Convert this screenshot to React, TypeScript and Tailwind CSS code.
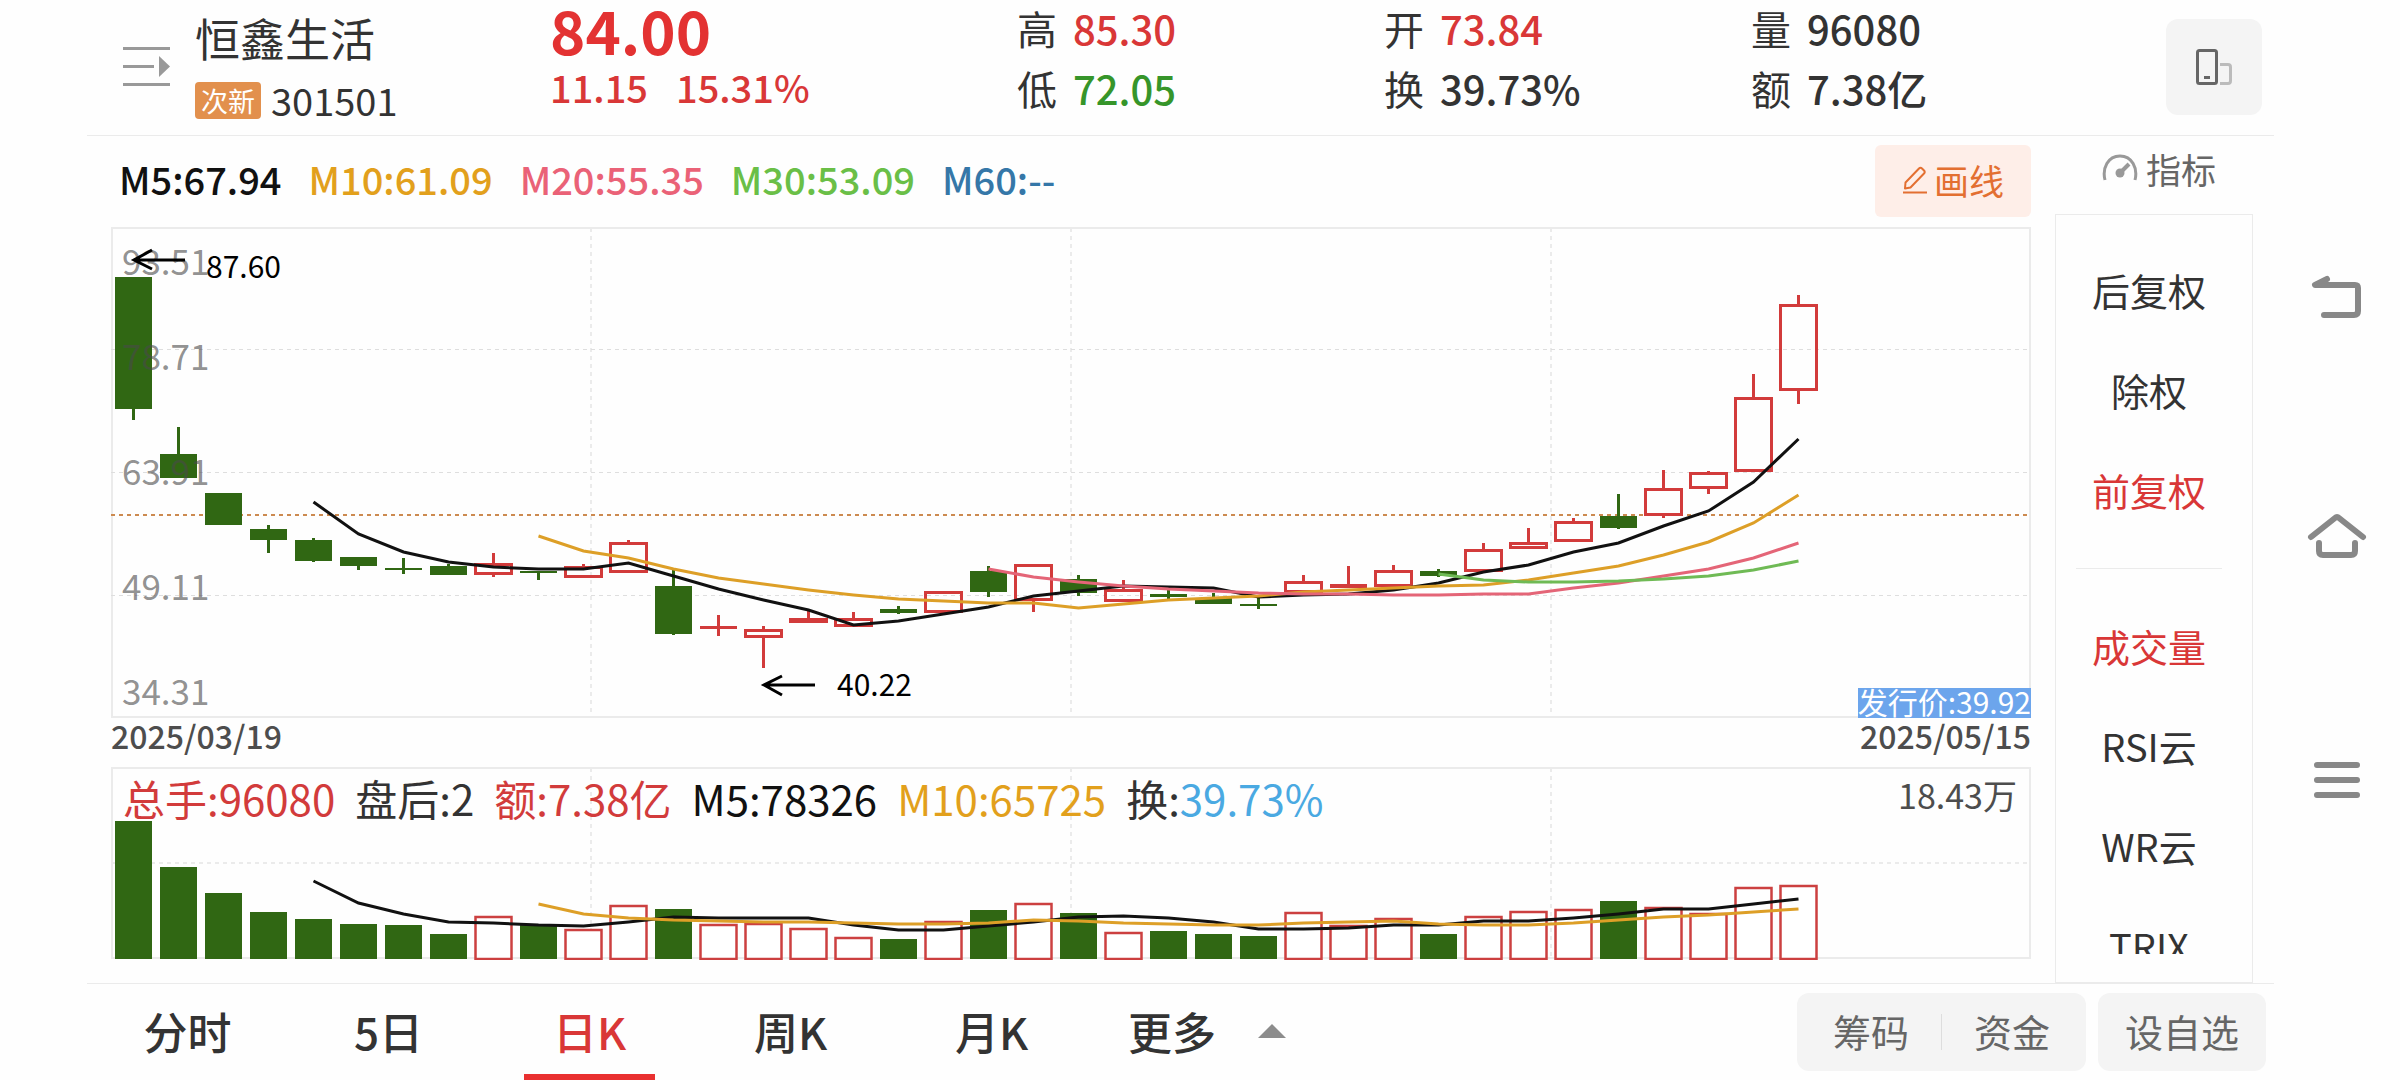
import React from "react"
import clsx from "clsx"

type Candle = [dir: "up" | "down", high: number, top: number, bottom: number, low: number]

const STEP = 45
const centerX = (i: number) => 22.5 + i * STEP

const candles: Candle[] = [
  ["down", 277, 277, 409, 420],
  ["down", 427, 454, 478, 478],
  ["down", 493, 493, 525, 525],
  ["down", 525, 529, 540, 553],
  ["down", 538, 540, 561, 562],
  ["down", 557, 557, 566, 570],
  ["down", 558, 568, 570, 574],
  ["down", 564, 566, 575, 575],
  ["up", 553, 563, 575, 577],
  ["down", 571, 571, 573, 580],
  ["up", 564, 566, 578, 578],
  ["up", 540, 542, 573, 573],
  ["down", 570, 586, 634, 635],
  ["up", 615, 626, 629, 636],
  ["up", 626, 629, 638, 668],
  ["up", 610, 618, 623, 623],
  ["up", 612, 618, 627, 627],
  ["down", 606, 609, 613, 614],
  ["up", 591, 591, 613, 613],
  ["down", 566, 571, 592, 597],
  ["up", 564, 564, 601, 612],
  ["down", 575, 579, 593, 596],
  ["up", 580, 589, 602, 602],
  ["down", 590, 594, 597, 599],
  ["down", 593, 598, 604, 604],
  ["down", 598, 604, 606, 609],
  ["up", 575, 581, 593, 593],
  ["up", 566, 584, 588, 588],
  ["up", 565, 570, 587, 587],
  ["down", 569, 571, 576, 577],
  ["up", 543, 549, 572, 572],
  ["up", 528, 542, 549, 549],
  ["up", 518, 521, 542, 542],
  ["down", 494, 516, 528, 529],
  ["up", 470, 488, 516, 518],
  ["up", 471, 472, 489, 494],
  ["up", 374, 397, 472, 472],
  ["up", 295, 304, 391, 404],
]

const volumeTops = [
  821, 867, 893, 912, 919, 924, 925, 934, 917, 925, 930, 906, 909, 925, 924, 929, 938, 939, 922,
  910, 904, 913, 933, 931, 934, 936, 913, 926, 919, 934, 917, 912, 910, 901, 908, 914, 888, 886,
]

const priceLines = [
  { from: 4, color: "#111111", ys: [502, 534, 552, 562, 567, 569, 569, 563, 576, 589, 600, 610, 625, 621, 614, 607, 596, 591, 586, 587, 588, 597, 595, 594, 590, 583, 572, 565, 552, 543, 526, 511, 482, 439] },
  { from: 9, color: "#dd9f27", ys: [536, 551, 558, 569, 578, 584, 590, 595, 599, 601, 603, 603, 608, 604, 600, 598, 596, 592, 590, 588, 586, 585, 580, 573, 566, 555, 542, 523, 495] },
  { from: 19, color: "#e46577", ys: [569, 577, 582, 586, 589, 591, 593, 594, 594, 595, 595, 594, 594, 588, 583, 576, 569, 558, 543] },
  { from: 29, color: "#6fba55", ys: [574, 580, 582, 582, 581, 579, 576, 570, 561] },
]

const volumeLines = [
  { from: 4, color: "#111111", ys: [881, 903, 914, 922, 923, 925, 926, 922, 917, 918, 918, 918, 925, 930, 930, 926, 922, 917, 916, 918, 922, 929, 929, 928, 925, 925, 921, 921, 918, 914, 909, 909, 904, 899] },
  { from: 9, color: "#dd9f27", ys: [904, 914, 918, 920, 921, 922, 922, 923, 924, 924, 923, 920, 921, 923, 924, 925, 925, 923, 922, 921, 924, 925, 925, 923, 920, 917, 915, 912, 909] },
]

const quotes = [
  [
    { label: "高", value: "85.30", color: "text-[#d93737]" },
    { label: "低", value: "72.05", color: "text-[#36952a]" },
  ],
  [
    { label: "开", value: "73.84", color: "text-[#d93737]" },
    { label: "换", value: "39.73%", color: "text-[#333333]" },
  ],
  [
    { label: "量", value: "96080", color: "text-[#333333]" },
    { label: "额", value: "7.38亿", color: "text-[#333333]" },
  ],
]

const averages = [
  { text: "M5:67.94", color: "text-[#111111]" },
  { text: "M10:61.09", color: "text-[#e2a01c]" },
  { text: "M20:55.35", color: "text-[#ea6277]" },
  { text: "M30:53.09", color: "text-[#6abf47]" },
  { text: "M60:--", color: "text-[#3577a8]" },
]

const axisLabels = [
  { text: "93.51", y: 275 },
  { text: "78.71", y: 370 },
  { text: "63.91", y: 485 },
  { text: "49.11", y: 600 },
  { text: "34.31", y: 705 },
]

const adjustModes = ["后复权", "除权", "前复权"]
const indicators = ["成交量", "RSI云", "WR云", "TRIX"]
const periods = ["分时", "5日", "日K", "周K", "月K"]

const GRID_X = [480, 960, 1440]

const Averages = ({ lines }: { lines: typeof priceLines }) => (
  <>
    {lines.map((line) => (
      <polyline
        key={line.color}
        points={line.ys.map((y, i) => `${centerX(line.from + i)},${y}`).join(" ")}
        fill="none"
        stroke={line.color}
        strokeWidth="3"
      />
    ))}
  </>
)

const PriceChart = () => (
  <svg viewBox="0 227 1920 491" className="block h-auto w-full" role="img" aria-label="日K">
    <g stroke="#ebebeb" strokeWidth="2" fill="none">
      <rect x="1" y="228" width="1918" height="489" />
      {GRID_X.map((x) => (
        <line key={x} x1={x} x2={x} y1="228" y2="717" strokeDasharray="4 4" />
      ))}
    </g>
    {[349.5, 472.5, 595.5].map((y) => (
      <line key={y} x1="0" x2="1920" y1={y} y2={y} stroke="#dedede" strokeDasharray="4 4" />
    ))}
    <line x1="0" x2="1920" y1="515" y2="515" stroke="#cc8a50" strokeWidth="2" strokeDasharray="4 4" />
    {candles.map(([dir, high, top, bottom, low], i) => {
      const x = centerX(i)
      const color = dir === "up" ? "#d23b3b" : "#306713"
      const hollow = dir === "up" && bottom - top > 4
      return (
        <g key={i} fill={color}>
          <rect x={x - 1.5} y={high} width="3" height={top - high} />
          <rect x={x - 1.5} y={bottom} width="3" height={low - bottom} />
          {hollow ? (
            <rect x={x - 18} y={top + 1.5} width="36" height={bottom - top - 3} fill="none" stroke={color} strokeWidth="3" />
          ) : (
            <rect x={x - 18.5} y={top} width="37" height={bottom - top} />
          )}
        </g>
      )
    })}
    <Averages lines={priceLines} />
    <g fontSize="35" fill="#4a4a4a" fillOpacity="0.62">
      {axisLabels.map((label) => (
        <text key={label.text} x="11" y={label.y}>
          {label.text}
        </text>
      ))}
    </g>
    <g stroke="#000000" strokeWidth="3" fill="none">
      <path d="M74 260H23M41 250L23 260L41 269" />
      <path d="M704 685H653M671 676L653 685L671 695" />
    </g>
    <g fontSize="30" fill="#000000">
      <text x="95" y="278">87.60</text>
      <text x="726" y="696">40.22</text>
    </g>
  </svg>
)

const VolumeChart = () => (
  <svg viewBox="0 767 1920 193" className="block h-auto w-full" role="img" aria-label="成交量">
    <g stroke="#ebebeb" strokeWidth="2" fill="none">
      <rect x="1" y="768" width="1918" height="190" />
      <line x1="0" x2="1920" y1="863" y2="863" strokeDasharray="4 4" />
      {GRID_X.map((x) => (
        <line key={x} x1={x} x2={x} y1="768" y2="958" strokeDasharray="4 4" />
      ))}
    </g>
    {volumeTops.map((y, i) =>
      candles[i][0] === "up" ? (
        <rect key={i} x={centerX(i) - 18} y={y} width="36" height={959 - y} fill="#ffffff" stroke="#cc4040" strokeWidth="2.5" />
      ) : (
        <rect key={i} x={centerX(i) - 18.5} y={y} width="37" height={959 - y} fill="#306713" />
      )
    )}
    <Averages lines={volumeLines} />
  </svg>
)

const Header = () => (
  <header className="flex h-[136px] items-start border-b border-[#ebebeb] pr-3">
    <button aria-label="展开列表" className="ml-9 mt-[46px]">
      <svg width="47" height="40" viewBox="0 0 47 40" fill="#999999">
        <rect width="47" height="3" y="1" />
        <rect width="31" height="3" y="19" />
        <rect width="47" height="3" y="37" />
        <path d="M36 10L47 20.500L36 31Z" />
      </svg>
    </button>
    <div className="ml-[25px] w-[355px] pt-2 text-[#333333]">
      <h1 className="text-[45px]/[60px]">恒鑫生活</h1>
      <div className="flex items-center gap-2.5 pt-0.5">
        <span className="rounded bg-[#e2904d] px-1.5 text-[27px]/[37px] text-white">次新</span>
        <span className="text-[38px]/[60px]">301501</span>
      </div>
    </div>
    <div className="w-[467px] font-medium text-[#d93737]">
      <div className="text-[60px]/[58px] font-bold text-[#e33232]">84.00</div>
      <div className="flex gap-7 text-[38px]/[58px]">
        <span>11.15</span>
        <span>15.31%</span>
      </div>
    </div>
    <dl className="flex flex-1">
      {quotes.map((column) => (
        <div key={column[0].label} className="flex w-[367px] flex-col gap-1">
          {column.map((item) => (
            <div key={item.label} className="flex gap-4 text-[40px]/[56px]">
              <dt className="text-[#333333]">{item.label}</dt>
              <dd className={clsx("font-medium", item.color)}>{item.value}</dd>
            </div>
          ))}
        </div>
      ))}
    </dl>
    <button aria-label="切换竖屏" className="mt-[19px] flex size-24 items-center justify-center rounded-xl bg-[#f4f4f4]">
      <svg width="38" height="38" viewBox="0 0 38 38" fill="none" strokeWidth="3">
        <rect x="2.500" y="2.500" width="19" height="33" rx="2" stroke="#666666" />
        <path d="M9 29.500H15" stroke="#666666" />
        <path d="M25 16.500H33Q35.500 16.500 35.500 19V33Q35.500 35.500 33 35.500H25" stroke="#bbbbbb" />
      </svg>
    </button>
  </header>
)

const Sidebar = () => (
  <aside className="flex w-[198px] shrink-0 flex-col">
    <button className="flex h-[78px] items-start justify-center gap-2 pl-2.5 pt-2.5 text-[35px]/[46px] text-[#666666]">
      <svg width="36" height="28" viewBox="0 0 36 28" fill="none" stroke="#999999" strokeWidth="3" className="mt-2">
        <path d="M3 26C0 14 6 2 18 2S36 14 33 26" />
        <path d="M18 19L27 10" strokeWidth="4" />
        <circle cx="18" cy="19" r="4.500" fill="#999999" stroke="none" />
      </svg>
      指标
    </button>
    <div className="flex flex-1 flex-col border border-[#ebebeb] pb-7 pr-2.5">
      <div className="flex h-0 grow flex-col overflow-hidden pt-6 text-[38px] text-[#333333]">
        {adjustModes.map((mode) => (
          <button key={mode} className={clsx("h-[100px] shrink-0", mode === "前复权" && "text-[#d93737]")}>
            {mode}
          </button>
        ))}
        <hr className="mx-5 mb-[26px] mt-[29px] border-[#ebebeb]" />
        {indicators.map((name) => (
          <button key={name} className={clsx("h-[100px] shrink-0", name === "成交量" && "text-[#d93737]")}>
            {name}
          </button>
        ))}
      </div>
    </div>
  </aside>
)

const Charts = () => (
  <section className="min-w-0 flex-1">
    <div className="flex h-[91px] items-start justify-between pt-[9px]">
      <div className="flex gap-[27px] pl-2 text-[38px]/[68px] font-medium">
        {averages.map((item) => (
          <span key={item.text} className={item.color}>
            {item.text}
          </span>
        ))}
      </div>
      <button className="flex h-[72px] w-[156px] items-center justify-center gap-1.5 rounded-md bg-[#feeee8] pb-0.5 text-[35px] text-[#e36f31]">
        <svg width="26" height="28" viewBox="0 0 26 28" fill="none" stroke="#e36f31" strokeWidth="2">
          <path d="M3.500 16.500L17 2.500Q18.500 1 20 2.500L22 4.500Q23.500 6 22 7.500L8.500 21.500L3 22.500Z" strokeLinejoin="round" />
          <path d="M1 26.500H25" />
        </svg>
        画线
      </button>
    </div>
    <div className="relative">
      <PriceChart />
      <span className="absolute bottom-0 right-0 bg-[#6ca5ec] pb-1 text-[30px]/[26px] text-white">发行价:39.92</span>
    </div>
    <div className="flex h-[49px] justify-between text-[32px]/[35px] font-medium text-[#4d4d4d]">
      <time>2025/03/19</time>
      <time>2025/05/15</time>
    </div>
    <div className="relative">
      <VolumeChart />
      <div className="absolute inset-x-0 top-0 flex justify-between pl-3 pr-3.5">
        <div className="flex gap-5 text-[42px]/[62px]">
          <span className="text-[#d23b3b]">总手:96080</span>
          <span className="text-[#333333]">盘后:2</span>
          <span className="text-[#d23b3b]">额:7.38亿</span>
          <span className="text-[#111111]">M5:78326</span>
          <span className="text-[#e2a01c]">M10:65725</span>
          <span className="text-[#333333]">
            换:<span className="text-[#4aa9e2]">39.73%</span>
          </span>
        </div>
        <span className="text-[34px]/[56px] text-[#4d4d4d]">18.43万</span>
      </div>
    </div>
  </section>
)

const Footer = () => (
  <footer className="flex h-[97px] border-t border-[#ebebeb] pr-2 text-[#333333]">
    <nav className="flex text-[44px] font-medium">
      {periods.map((period) => (
        <button key={period} className={clsx("relative w-[201px] pb-0.5", period === "日K" && "text-[#d93737]")}>
          {period}
          {period === "日K" && <span className="absolute inset-x-[35px] bottom-0 h-1.5 bg-[#e93030]" />}
        </button>
      ))}
      <button className="ml-9 flex items-center gap-[42px] pb-0.5">
        更多
        <svg width="28" height="14" viewBox="0 0 28 14" fill="#8c8c8c">
          <path d="M14 0L28 14H0Z" />
        </svg>
      </button>
    </nav>
    <div className="ml-auto mt-[9px] flex h-[78px] gap-3 text-[38px] text-[#666666]">
      <div className="flex items-center rounded-xl bg-[#f4f4f4] px-1">
        <button className="w-[140px] pb-1">筹码</button>
        <span className="h-9 w-px bg-[#dddddd]" />
        <button className="w-[140px] pb-1">资金</button>
      </div>
      <button className="w-[168px] rounded-xl bg-[#f4f4f4] pb-1">设自选</button>
    </div>
  </footer>
)

const SystemNav = () => (
  <nav className="flex w-[126px] shrink-0 flex-col items-center justify-center gap-[182px] pb-0.5">
    <button aria-label="返回">
      <svg width="60" height="60" viewBox="0 0 60 60" fill="none" stroke="#888888" strokeWidth="6" strokeLinecap="round" strokeLinejoin="round">
        <path d="M20 12L8 18H48Q51 18 51 21V44Q51 48 47 48H17" />
      </svg>
    </button>
    <button aria-label="主页">
      <svg width="60" height="60" viewBox="0 0 60 60" fill="none" stroke="#888888" strokeWidth="6" strokeLinecap="round" strokeLinejoin="round">
        <path d="M4 28L28 9Q30 7 32 9L56 28" />
        <path d="M12 34V42Q12 46 16 46H44Q48 46 48 42V34" />
      </svg>
    </button>
    <button aria-label="菜单">
      <svg width="60" height="60" viewBox="0 0 60 60" fill="none" stroke="#888888" strokeWidth="6" strokeLinecap="round">
        <path d="M10 14H50M10 29H50M10 44H50" />
      </svg>
    </button>
  </nav>
)

const App = () => {
  return (
    <div className="flex min-h-screen bg-[#fefefe] font-['Noto_Sans_CJK_SC',sans-serif]">
      <main className="ml-[87px] flex min-w-0 flex-1 flex-col">
        <Header />
        <div className="flex flex-1 gap-6 pl-6 pr-[21px]">
          <Charts />
          <Sidebar />
        </div>
        <Footer />
      </main>
      <SystemNav />
    </div>
  )
}

export default App
